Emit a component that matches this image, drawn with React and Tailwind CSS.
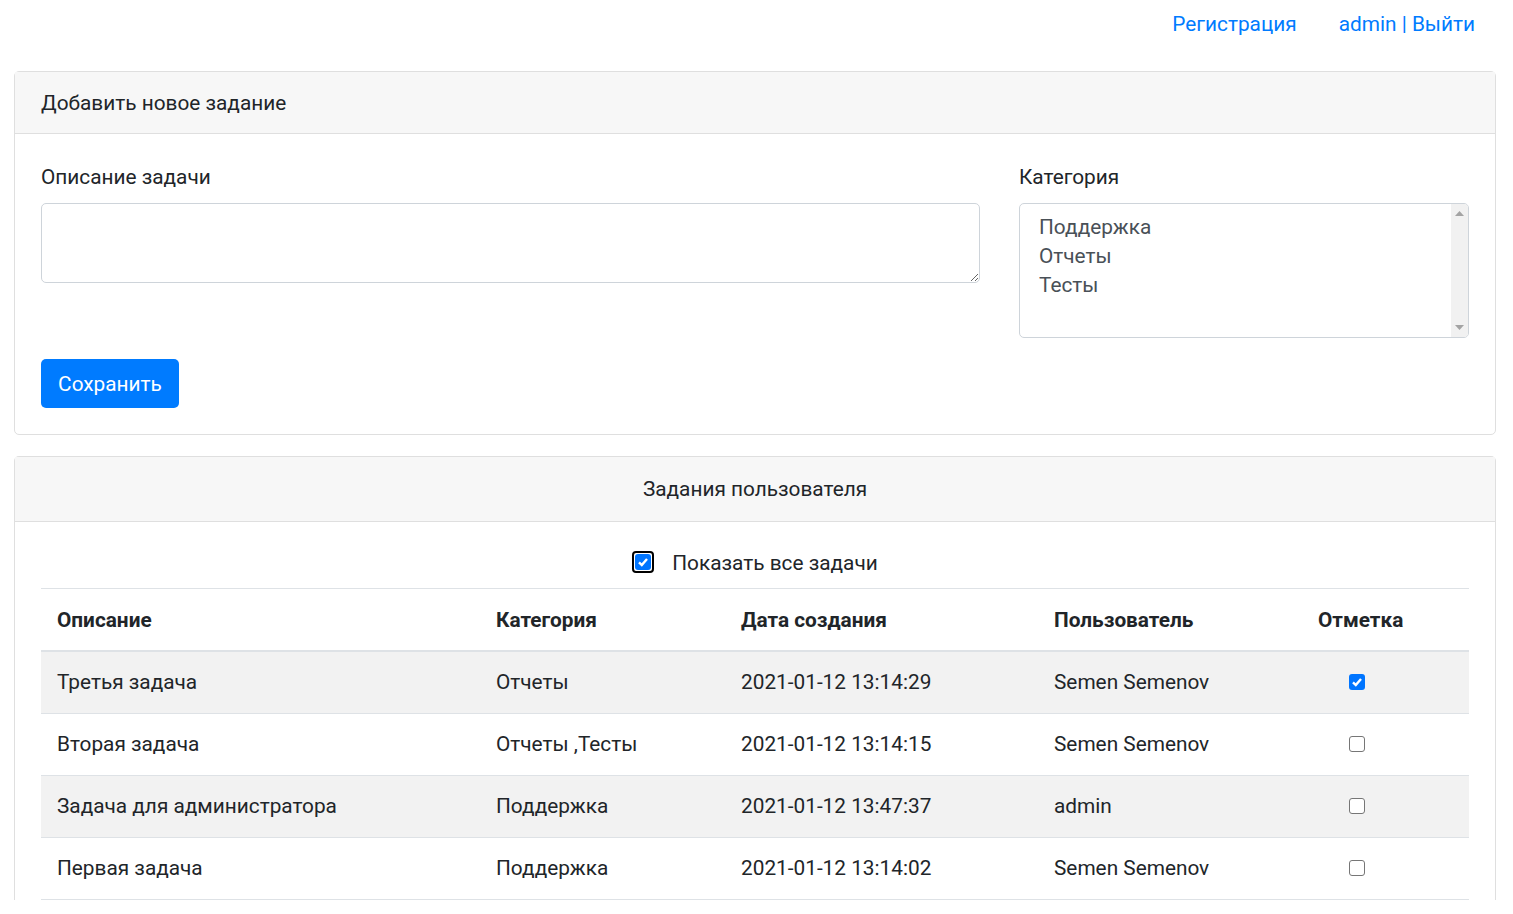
import React from 'react';

const rows = [
  { desc: 'Третья задача', cat: 'Отчеты', date: '2021-01-12 13:14:29', user: 'Semen Semenov', done: true },
  { desc: 'Вторая задача', cat: 'Отчеты ,Тесты', date: '2021-01-12 13:14:15', user: 'Semen Semenov', done: false },
  { desc: 'Задача для администратора', cat: 'Поддержка', date: '2021-01-12 13:47:37', user: 'admin', done: false },
  { desc: 'Первая задача', cat: 'Поддержка', date: '2021-01-12 13:14:02', user: 'Semen Semenov', done: false },
];

const Check = ({ checked }) =>
  checked ? (
    <span className="flex h-4 w-4 items-center justify-center rounded-[3px] bg-[#0075ff]">
      <svg width="12" height="12" viewBox="0 0 12 12">
        <path d="M2 6.3 L4.8 9 L10 3" fill="none" stroke="#fff" strokeWidth="2.4" />
      </svg>
    </span>
  ) : (
    <span className="block h-4 w-4 rounded-[3px] border border-[#767676] bg-white" />
  );

const App = () => {
  return (
    <div className="min-h-[914px] bg-white pb-10 text-[20.8px] leading-[30px] text-[#212529]" style={{ fontFamily: 'Roboto, "Noto Sans", sans-serif' }}>
      {/* top nav */}
      <div className="flex h-12 items-center justify-end gap-[42px] pr-[38px] text-[#007bff]">
        <span>Регистрация</span>
        <span>admin | Выйти</span>
      </div>

      {/* add task card */}
      <div className="ml-[14px] mr-[17px] mt-[23px] rounded-[5px] border border-[#dfdfdf]">
        <div className="flex h-[62px] items-center border-b border-[#dfdfdf] bg-[#f7f7f7] px-[26px]">
          Добавить новое задание
        </div>
        <div className="px-[26px] pb-[26px] pt-[28px]">
          <div className="flex gap-[39px]">
            <div className="w-[939px]">
              <div className="mb-[11px] leading-[30px]">Описание задачи</div>
              <textarea
                readOnly
                className="block h-[80px] w-full rounded-[5px] border border-[#ced4da] bg-white outline-none"
              />
            </div>
            <div className="w-[450px]">
              <div className="mb-[11px] leading-[30px]">Категория</div>
              <div className="flex h-[135px] w-full overflow-hidden rounded-[5px] border border-[#ced4da]">
                <div className="flex-1 px-[19px] pt-[9px] leading-[29px] text-[#495057]">
                  <div>Поддержка</div>
                  <div>Отчеты</div>
                  <div>Тесты</div>
                </div>
                <div className="flex w-[17px] flex-col items-center justify-between bg-[#f1f1f1] py-[7px]">
                  <svg width="9" height="5" viewBox="0 0 9 5"><path d="M0 5 L4.5 0 L9 5 Z" fill="#a3a3a3" /></svg>
                  <svg width="9" height="5" viewBox="0 0 9 5"><path d="M0 0 L4.5 5 L9 0 Z" fill="#a3a3a3" /></svg>
                </div>
              </div>
            </div>
          </div>
          <button className="mt-[21px] flex h-[49px] w-[138px] items-center justify-center rounded-[5px] bg-[#007bff] text-white">
            Сохранить
          </button>
        </div>
      </div>

      {/* tasks card */}
      <div className="ml-[14px] mr-[17px] mt-[21px] rounded-t-[5px] border border-b-0 border-[#dfdfdf]">
        <div className="flex h-[65px] items-center justify-center border-b border-[#dfdfdf] bg-[#f7f7f7]">
          Задания пользователя
        </div>
        <div className="px-[26px] pt-[26px]">
          <div className="flex h-[40px] items-start justify-center gap-[18px]">
            <span className="mt-[3px] flex h-[22px] w-[22px] items-center justify-center rounded-[4px] border-2 border-black bg-white">
              <span className="flex h-4 w-4 items-center justify-center rounded-[3px] bg-[#0075ff]">
                <svg width="12" height="12" viewBox="0 0 12 12">
                  <path d="M2 6.3 L4.8 9 L10 3" fill="none" stroke="#fff" strokeWidth="2.4" />
                </svg>
              </span>
            </span>
            <span>Показать все задачи</span>
          </div>
          <div className="border-t border-[#dee2e6]" />
          <table className="w-full border-collapse">
            <thead>
              <tr className="h-[62px] border-b-2 border-[#dee2e6] text-left">
                <th className="w-[439px] px-4 font-bold">Описание</th>
                <th className="w-[245px] px-4 font-bold">Категория</th>
                <th className="w-[313px] px-4 font-bold">Дата создания</th>
                <th className="w-[264px] px-4 font-bold">Пользователь</th>
                <th className="px-4 font-bold">Отметка</th>
              </tr>
            </thead>
            <tbody>
              {rows.map((row, i) => (
                <tr key={i} className={`h-[62px] border-b border-[#dee2e6] ${i % 2 === 0 ? 'bg-[#f2f2f2]' : 'bg-white'}`}>
                  <td className="px-4">{row.desc}</td>
                  <td className="px-4">{row.cat}</td>
                  <td className="px-4">{row.date}</td>
                  <td className="px-4">{row.user}</td>
                  <td className="px-4">
                    <div className="pl-[31px]">
                      <Check checked={row.done} />
                    </div>
                  </td>
                </tr>
              ))}
            </tbody>
          </table>
        </div>
      </div>
    </div>
  );
};

export default App;
